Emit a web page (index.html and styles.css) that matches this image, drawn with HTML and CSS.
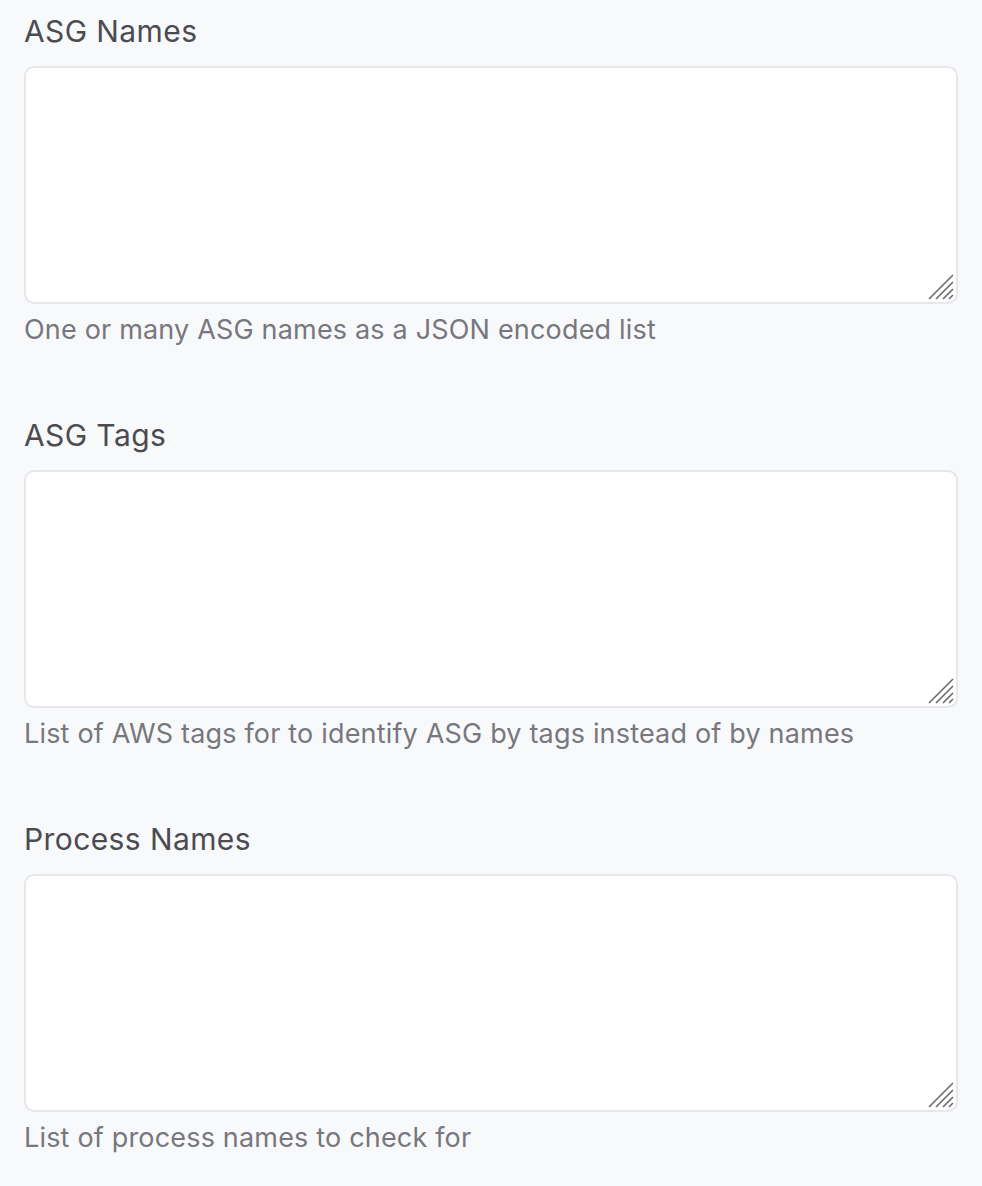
FILE: index.html
```html
<!DOCTYPE html>
<html>
<head>
<meta charset="utf-8">
<link rel="stylesheet" href="styles.css">
</head>
<body>
<div class="form">
  <div class="field">
    <label class="label" for="asg-names">ASG Names</label>
    <div class="ta-wrap">
      <textarea id="asg-names" class="ta"></textarea>
      <svg class="grip" width="26" height="26" viewBox="0 0 26 26"><path d="M1 25 L25 1 M8 25 L25 8 M15 25 L25 15 M21 25 L25 21" stroke="#6a6a6e" stroke-width="1.6" fill="none"/></svg>
    </div>
    <div class="help">One or many ASG names as a JSON encoded list</div>
  </div>
  <div class="field">
    <label class="label" for="asg-tags">ASG Tags</label>
    <div class="ta-wrap">
      <textarea id="asg-tags" class="ta"></textarea>
      <svg class="grip" width="26" height="26" viewBox="0 0 26 26"><path d="M1 25 L25 1 M8 25 L25 8 M15 25 L25 15 M21 25 L25 21" stroke="#6a6a6e" stroke-width="1.6" fill="none"/></svg>
    </div>
    <div class="help">List of AWS tags for to identify ASG by tags instead of by names</div>
  </div>
  <div class="field">
    <label class="label" for="proc-names">Process Names</label>
    <div class="ta-wrap">
      <textarea id="proc-names" class="ta"></textarea>
      <svg class="grip" width="26" height="26" viewBox="0 0 26 26"><path d="M1 25 L25 1 M8 25 L25 8 M15 25 L25 15 M21 25 L25 21" stroke="#6a6a6e" stroke-width="1.6" fill="none"/></svg>
    </div>
    <div class="help">List of process names to check for</div>
  </div>
</div>
</body>
</html>
```
FILE: styles.css
```css
html, body {
  margin: 0;
  padding: 0;
  background: #f8f9fb;
}
body {
  font-family: Inter, "Liberation Sans", sans-serif;
}
.form {
  padding: 11px 24px 0 24px;
  display: flex;
  flex-direction: column;
  gap: 67px;
}
.field {
  display: flex;
  flex-direction: column;
}
.label {
  font-size: 30px;
  line-height: 40px;
  letter-spacing: 0.4px;
  color: #4b4b50;
  margin-bottom: 15px;
}
.ta-wrap {
  position: relative;
  height: 238px;
}
.ta {
  box-sizing: border-box;
  width: 100%;
  height: 238px;
  display: block;
  margin: 0;
  border: 2px solid #e6e7eb;
  border-radius: 10px;
  background: #fff;
  resize: none;
  outline: none;
}
.grip {
  position: absolute;
  right: 4px;
  bottom: 4px;
}
.help {
  margin-top: 8px;
  font-size: 27px;
  line-height: 36px;
  letter-spacing: 0.18px;
  color: #77777d;
}
```
